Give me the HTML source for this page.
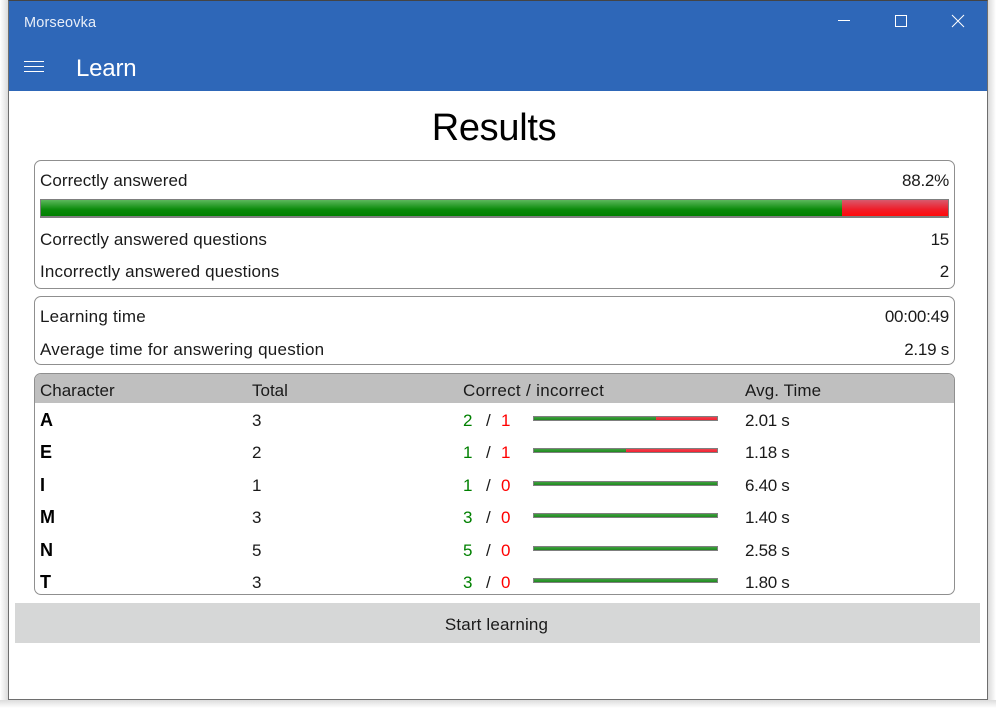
<!DOCTYPE html>
<html>
<head>
<meta charset="utf-8">
<style>
html,body{margin:0;padding:0;background:#fff}
body{width:996px;height:708px;position:relative;overflow:hidden;font-family:"Liberation Sans",sans-serif;color:#1a1a1a}
.t{position:absolute;white-space:nowrap;font-size:17px;line-height:22px;height:22px;margin-top:1px}
.r{text-align:right;right:47px;letter-spacing:-.25px}
.n{letter-spacing:-.3px}
.box{position:absolute;left:34px;width:919px;border:1.5px solid #8f8f8f;border-radius:7px;box-sizing:content-box}
.mini{position:absolute;left:533px;width:185px;height:5px;background:#7f7f7f}
.mini i{position:absolute;left:1px;top:1px;height:3px;display:block;background:linear-gradient(#3f9f3f,#1e8a1e)}
.mini i.x{background:linear-gradient(#ea4450,#f52030)}
.g{color:#008000}.rd{color:#ff0000}
b{color:#000;font-size:18px;position:relative;top:-1px}
</style>
</head>
<body>
<div style="position:absolute;left:0;top:0;width:8px;height:708px;background:linear-gradient(to right,#fff,#dcdcdc)"></div>
<div style="position:absolute;left:988px;top:0;width:8px;height:708px;background:linear-gradient(to left,#fff,#dadada)"></div>
<div style="position:absolute;left:0;top:700px;width:996px;height:8px;background:linear-gradient(to top,#fff,#dcdcdc)"></div>
<div style="position:absolute;left:8px;top:0;width:980px;height:700px;box-sizing:border-box;border:1px solid #6e6e6e;border-top-color:#444;background:#fff"></div>
<div style="position:absolute;left:9px;top:1px;width:978px;height:90px;background:#2e67b8"></div>

<div class="t" style="left:24px;top:11px;font-size:14.5px;letter-spacing:.15px;color:#e8eef8">Morseovka</div>
<div class="t" style="left:76px;top:54px;font-size:24px;line-height:28px;height:28px;letter-spacing:-.2px;color:#fff">Learn</div>
<div style="position:absolute;left:24px;top:61px;width:20px;height:1px;background:#fff"></div>
<div style="position:absolute;left:24px;top:66px;width:20px;height:1px;background:#fff"></div>
<div style="position:absolute;left:24px;top:71px;width:20px;height:1px;background:#fff"></div>

<svg style="position:absolute;left:820px;top:0" width="160" height="40" fill="none" stroke="#fff" stroke-width="1">
<path d="M18 20.5H30"/>
<rect x="75.5" y="15.5" width="11" height="11"/>
<path d="M132 15L144 27M144 15L132 27"/>
</svg>

<div class="t" style="left:9px;width:970px;text-align:center;top:103px;font-size:38px;line-height:48px;height:48px;letter-spacing:-.3px;color:#000">Results</div>

<div class="box" style="top:160px;height:127px"></div>
<div class="t" style="left:40px;top:169px;letter-spacing:.06px">Correctly answered</div>
<div class="t r" style="top:169px">88.2%</div>
<div style="position:absolute;left:40px;top:199px;width:909px;height:19px;background:#7f7f7f"></div>
<div style="position:absolute;left:41px;top:200px;width:801px;height:16px;background:linear-gradient(#5cb85c,#0a8a0a 60%,#008000)"></div>
<div style="position:absolute;left:842px;top:200px;width:106px;height:16px;background:linear-gradient(#d9596c,#f01c28 60%,#ff0a0a)"></div>
<div class="t" style="left:40px;top:228px;letter-spacing:.11px">Correctly answered questions</div>
<div class="t r" style="top:228px">15</div>
<div class="t" style="left:40px;top:260px;letter-spacing:.17px">Incorrectly answered questions</div>
<div class="t r" style="top:260px">2</div>

<div class="box" style="top:296px;height:67px"></div>
<div class="t" style="left:40px;top:305px;letter-spacing:.23px">Learning time</div>
<div class="t r" style="top:305px">00:00:49</div>
<div class="t" style="left:40px;top:338px;letter-spacing:.25px">Average time for answering question</div>
<div class="t r" style="top:338px">2.19 s</div>

<div class="box" style="top:373px;height:220px"></div>
<div style="position:absolute;left:35px;top:374px;width:919px;height:29px;background:#bfbfbf;border-radius:6px 6px 0 0"></div>
<div class="t" style="left:40px;top:379px">Character</div>
<div class="t" style="left:252px;top:379px">Total</div>
<div class="t" style="left:463px;top:379px;letter-spacing:.32px">Correct / incorrect</div>
<div class="t" style="left:745px;top:379px;letter-spacing:.1px">Avg. Time</div>

<div class="t" style="left:40px;top:409px"><b>A</b></div>
<div class="t" style="left:252px;top:409px">3</div>
<div class="t g" style="left:463px;top:409px">2</div>
<div class="t" style="left:486px;top:409px">/</div>
<div class="t rd" style="left:501px;top:409px">1</div>
<div class="mini" style="top:416px"><i style="width:122px"></i><i class="x" style="left:123px;width:61px"></i></div>
<div class="t n" style="left:745px;top:409px">2.01 s</div>

<div class="t" style="left:40px;top:441px"><b>E</b></div>
<div class="t" style="left:252px;top:441px">2</div>
<div class="t g" style="left:463px;top:441px">1</div>
<div class="t" style="left:486px;top:441px">/</div>
<div class="t rd" style="left:501px;top:441px">1</div>
<div class="mini" style="top:448px"><i style="width:92px"></i><i class="x" style="left:93px;width:91px"></i></div>
<div class="t n" style="left:745px;top:441px">1.18 s</div>

<div class="t" style="left:40px;top:474px"><b>I</b></div>
<div class="t" style="left:252px;top:474px">1</div>
<div class="t g" style="left:463px;top:474px">1</div>
<div class="t" style="left:486px;top:474px">/</div>
<div class="t rd" style="left:501px;top:474px">0</div>
<div class="mini" style="top:481px"><i style="width:183px"></i></div>
<div class="t n" style="left:745px;top:474px">6.40 s</div>

<div class="t" style="left:40px;top:506px"><b>M</b></div>
<div class="t" style="left:252px;top:506px">3</div>
<div class="t g" style="left:463px;top:506px">3</div>
<div class="t" style="left:486px;top:506px">/</div>
<div class="t rd" style="left:501px;top:506px">0</div>
<div class="mini" style="top:513px"><i style="width:183px"></i></div>
<div class="t n" style="left:745px;top:506px">1.40 s</div>

<div class="t" style="left:40px;top:539px"><b>N</b></div>
<div class="t" style="left:252px;top:539px">5</div>
<div class="t g" style="left:463px;top:539px">5</div>
<div class="t" style="left:486px;top:539px">/</div>
<div class="t rd" style="left:501px;top:539px">0</div>
<div class="mini" style="top:546px"><i style="width:183px"></i></div>
<div class="t n" style="left:745px;top:539px">2.58 s</div>

<div class="t" style="left:40px;top:571px"><b>T</b></div>
<div class="t" style="left:252px;top:571px">3</div>
<div class="t g" style="left:463px;top:571px">3</div>
<div class="t" style="left:486px;top:571px">/</div>
<div class="t rd" style="left:501px;top:571px">0</div>
<div class="mini" style="top:578px"><i style="width:183px"></i></div>
<div class="t n" style="left:745px;top:571px">1.80 s</div>

<div style="position:absolute;left:15px;top:603px;width:965px;height:40px;background:#d6d7d7"></div>
<div class="t" style="left:15px;width:963px;text-align:center;top:613px;letter-spacing:.15px">Start learning</div>
</body>
</html>
